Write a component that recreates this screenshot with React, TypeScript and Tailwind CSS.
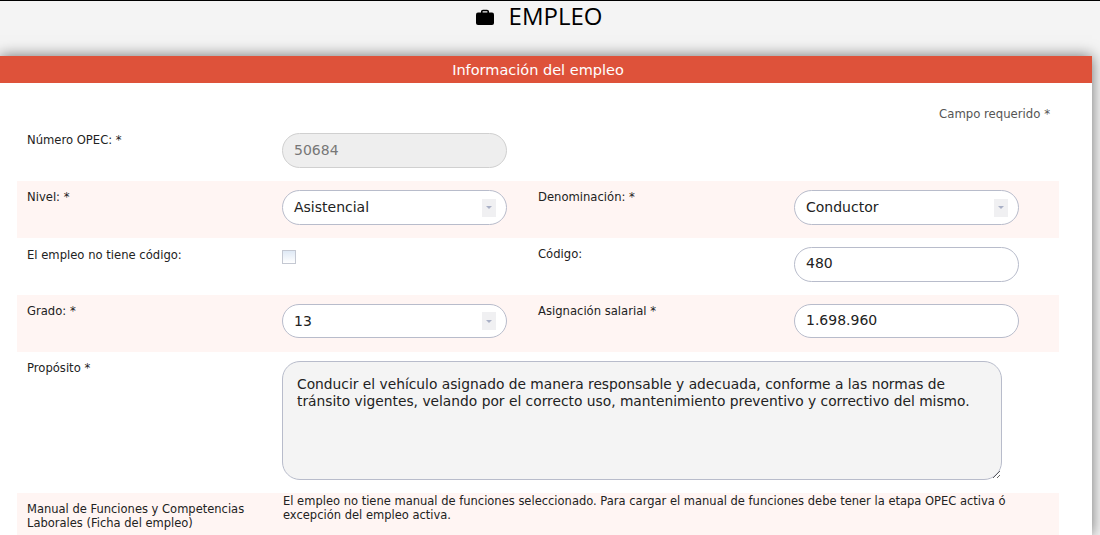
import React from 'react';

// Select look-alike: rounded box with the small grey arrow tile
function SelectBox({ value, h = 'h-[35px]' }: { value: string; h?: string }) {
    return (
        <div className={`w-[225px] ${h} bg-white border border-[#b8bccb] rounded-[18px] flex items-center justify-between pl-[11px] pr-[10px] text-[14px] text-[#222]`}>
            <span>{value}</span>
            <span className="w-[14px] h-[18px] bg-[#f0f0f2] flex items-center justify-center">
                <span className="w-0 h-0 border-l-[3px] border-r-[3px] border-t-[3px] border-l-transparent border-r-transparent border-t-[#a9b0c6]" />
            </span>
        </div>
    );
}

function TextBox({ value, disabled = false, h = 'h-[35px]' }: { value: string; disabled?: boolean; h?: string }) {
    return (
        <input
            readOnly
            value={value}
            className={`block w-[225px] ${h} border rounded-[18px] pl-[11px] pr-[10px] text-[14px] outline-none ${disabled ? 'pb-[2px] bg-[#eeeeee] border-[#d0d0d0] text-[#777]' : 'pb-[3px] bg-white border-[#b8bccb] text-[#222]'}`}
        />
    );
}

function Label({ children }: { children: React.ReactNode }) {
    return <label className="block text-[11.6px] leading-[14px] text-[#222]">{children}</label>;
}

export default function App() {
    const cols = 'grid grid-cols-[255px_256px_256px_1fr] px-[10px]';
    return (
        <div className="h-[535px] overflow-hidden bg-[#f4f4f4] border-t border-black font-['DejaVu_Sans',sans-serif]">
            {/* TITLE */}
            <div className="h-[55px] flex justify-center pr-[22px]">
                <h1 className="flex items-center h-[30px] gap-[15px] text-[24px] text-black font-['Open_Sans',sans-serif]">
                    <svg width="18" height="16" viewBox="0 0 18 16" className="mt-[2px]" fill="black">
                        <path d="M5 4V2.5C5 1.4 5.9 .7 7 .7h4c1.1 0 2 .7 2 1.8V4h-1.6V2.6c0-.3-.2-.4-.5-.4H7.100c-.3 0-.5.100-.5.400V4z" />
                        <rect x="0" y="3.500" width="18" height="12.500" rx="2" />
                    </svg>
                    EMPLEO
                </h1>
            </div>

            {/* CARD */}
            <div className="w-[1092px] h-[479px] bg-white shadow-[0_0_14px_rgba(0,0,0,0.55)]">
                <div className="h-[27px] bg-[#de523a] text-white text-[14.500px] leading-[28px] text-center pr-[16px]">
                    Información del empleo
                </div>

                <div className="pl-[17px] pr-[33px]">
                    <p className="h-[50px] pt-[24px] pr-[9px] text-right text-[11.7px] leading-[14px] text-[#555]">Campo requerido *</p>

                    <div className={`h-[48px] ${cols}`}>
                        <Label>Número OPEC: *</Label>
                        <TextBox value="50684" disabled />
                    </div>

                    <div className={`h-[57px] pt-[9px] bg-[#fff5f3] ${cols}`}>
                        <Label>Nivel: *</Label>
                        <SelectBox value="Asistencial" />
                        <Label>Denominación: *</Label>
                        <SelectBox value="Conductor" />
                    </div>

                    <div className={`h-[57px] pt-[10px] ${cols}`}>
                        <Label>El empleo no tiene código:</Label>
                        <div className="w-[14px] h-[14px] mt-[2px] border border-[#c4c8d2] bg-gradient-to-b from-[#dfe9f5] to-white" />
                        <div className="-mt-[1px]"><Label>Código:</Label></div>
                        <div className="-mt-[1px]"><TextBox value="480" /></div>
                    </div>

                    <div className={`h-[57px] pt-[9px] bg-[#fff5f3] ${cols}`}>
                        <Label>Grado: *</Label>
                        <SelectBox value="13" h="h-[34px]" />
                        <Label>Asignación salarial *</Label>
                        <TextBox value="1.698.960" h="h-[34px]" />
                    </div>

                    <div className={`h-[141px] pt-[9px] ${cols}`}>
                        <Label>Propósito *</Label>
                        <textarea
                            readOnly
                            className="col-span-3 block w-[720px] h-[119px] bg-[#f4f4f4] border border-[#b8bccb] rounded-[18px] px-[14px] py-[14px] text-[13.800px] leading-[17px] text-[#222] outline-none"
                            value="Conducir el vehículo asignado de manera responsable y adecuada, conforme a las normas de tránsito vigentes, velando por el correcto uso, mantenimiento preventivo y correctivo del mismo."
                        />
                    </div>

                    <div className={`h-[42px] bg-[#fff5f3] text-[11.500px] leading-[14px] text-[#222] ${cols}`}>
                        <div className="pt-[9px]">Manual de Funciones y Competencias Laborales (Ficha del empleo)</div>
                        <div className="col-span-3 pt-[1px] pl-[1px]">El empleo no tiene manual de funciones seleccionado. Para cargar el manual de funciones debe tener la etapa OPEC activa ó excepción del empleo activa.</div>
                    </div>
                </div>
            </div>
        </div>
    );
}
